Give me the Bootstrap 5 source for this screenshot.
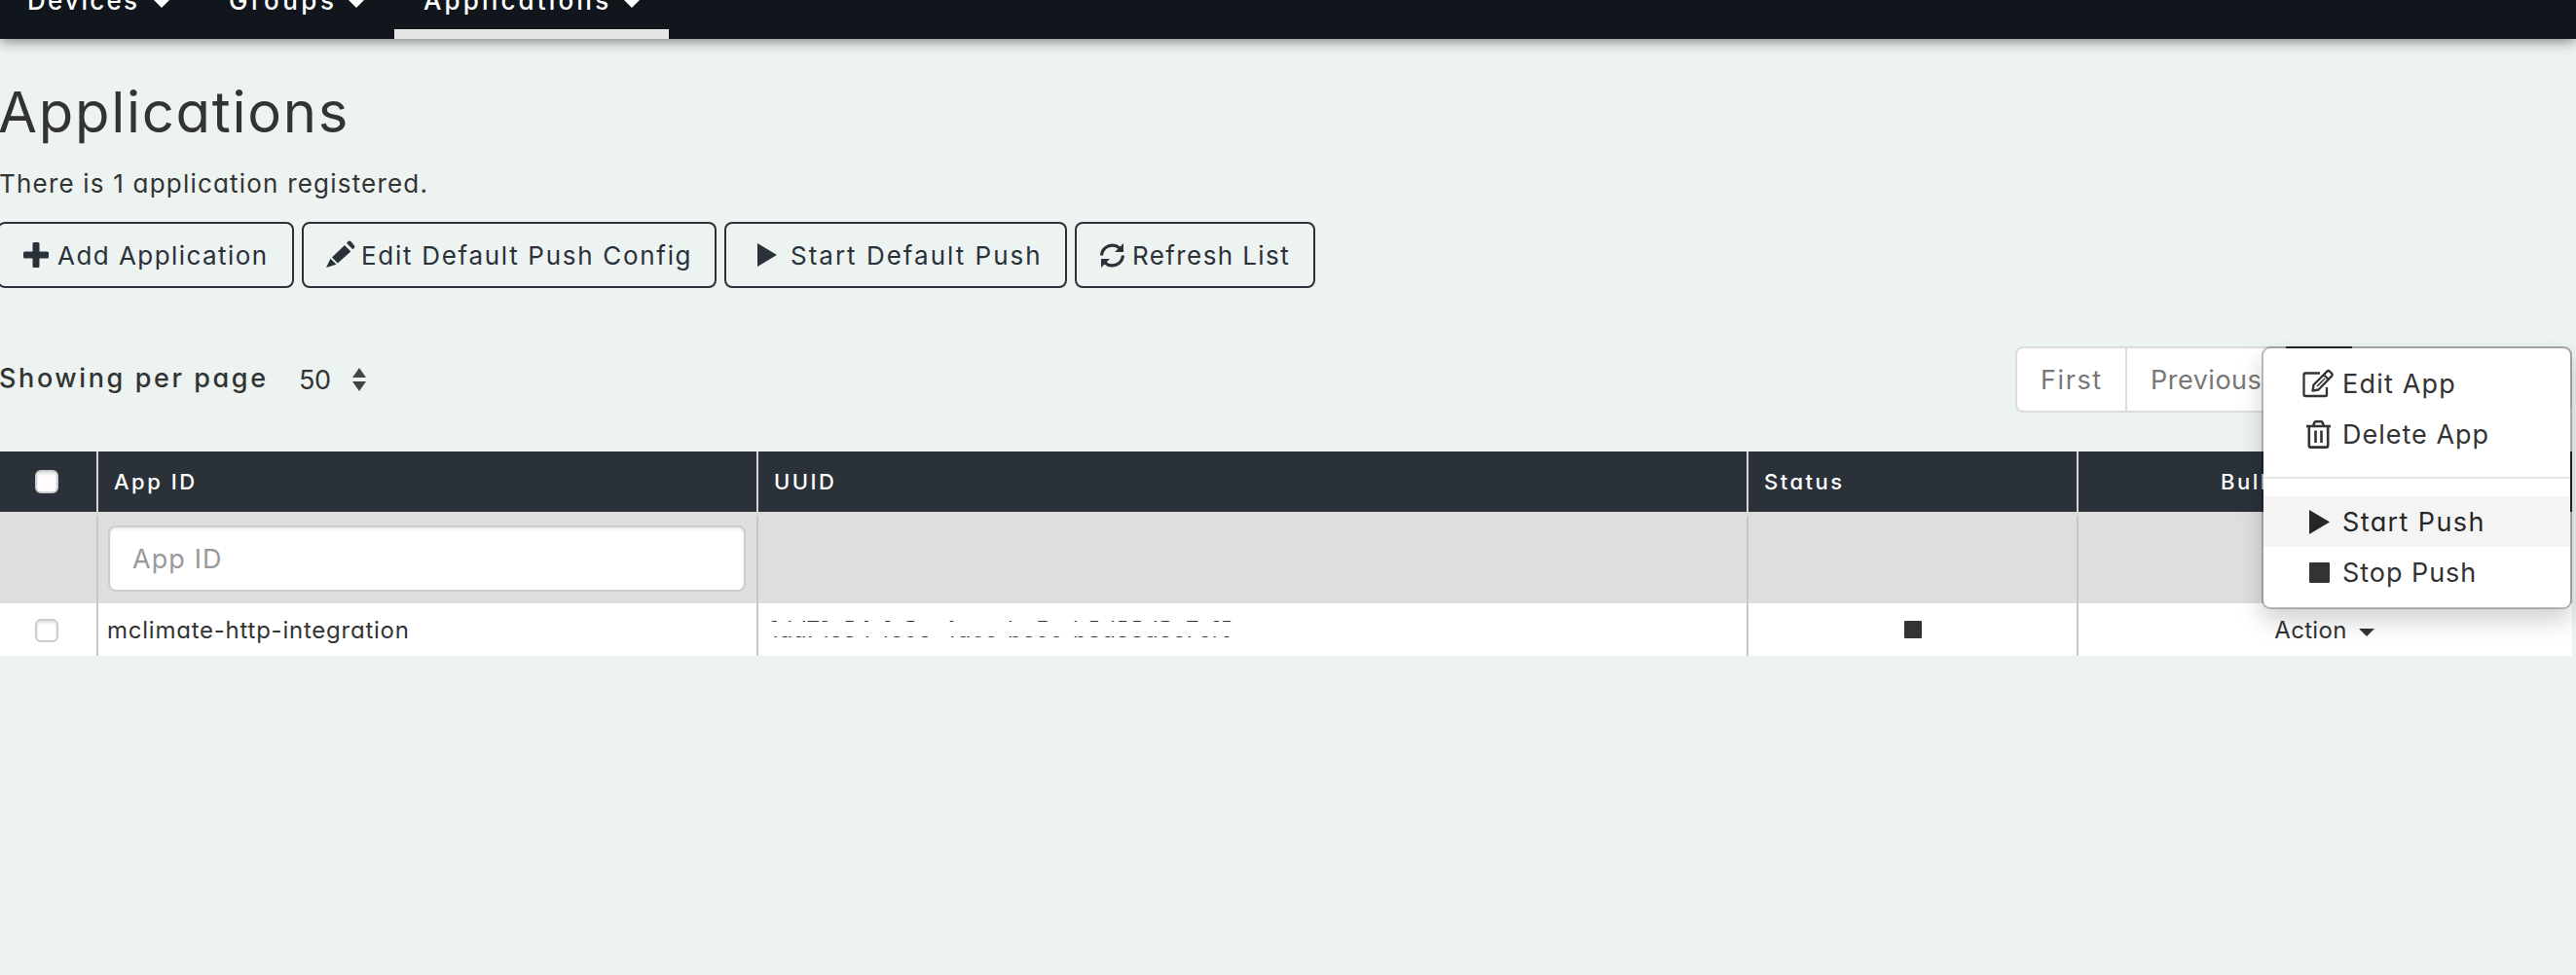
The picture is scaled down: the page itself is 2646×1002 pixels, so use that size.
<!DOCTYPE html>
<html lang="en">
<head>
<meta charset="utf-8">
<title>Applications</title>
<link href="https://cdn.jsdelivr.net/npm/bootstrap@5.3.0/dist/css/bootstrap.min.css" rel="stylesheet">
<style>
body{background:#ecf3f1;color:#333;font-family:Inter,"Liberation Sans",sans-serif;font-feature-settings:"cv11";font-size:26px;line-height:36px;letter-spacing:1.2px;overflow:hidden;min-height:1002px}
svg{display:block;flex:none}
.topbar{height:40px;background:#11161d;box-shadow:0 2px 14px rgba(0,0,0,.5);overflow:visible;padding:0;align-items:flex-end;flex-wrap:nowrap;justify-content:flex-start}
.topbar .nav-link{height:80px;padding:1px 0 0 30px;color:#fff;font-weight:500;display:flex;align-items:center;letter-spacing:2.3px;white-space:nowrap}
.topbar .nav-link:first-child{padding-left:28px}
.topbar .active{box-shadow:inset 0 -10px #e6e6e6}
.tri{width:0;height:0;border:9px solid transparent;border-top-color:currentColor;border-bottom:0;flex:none}
.topbar .tri{margin-left:14px;margin-top:5px}
h1.page-title{font-size:58px;line-height:64px;letter-spacing:1.72px;font-weight:400;margin:43px 0 24px -2px}
.act{height:68px;border:2px solid #2b3139;border-radius:8px;color:#2b3139;font-size:26px;padding:0;display:flex;align-items:center;white-space:nowrap}
.per{font-size:27px;font-weight:500;letter-spacing:2.6px}
.pg{height:68px;background:#fff;border:2px solid #dcdcdc;color:#777;font-size:27px;line-height:66px;padding:0 24px;white-space:nowrap}
.grid-table{width:2642px;table-layout:fixed;border-collapse:separate;border-spacing:0;letter-spacing:.76px;font-size:24px}
.grid-table th,.grid-table td{padding:0;vertical-align:middle;border-left:2px solid #c8c8c8}
.grid-table th{height:62px;background:#2a3139;color:#fff;font-size:22px;font-weight:550;letter-spacing:2.5px;padding-left:16px;border-color:#d4d4d4}
.grid-table th:first-child,.grid-table td:first-child{border-left:0;padding-left:0}
.grid-table .gap-row td{height:4px;background:#dcdcdc;border-color:#dcdcdc}
.grid-table .filter-row td{height:90px;background:#dedede}
.grid-table .data-row td{height:54px;background:#fff;padding-top:1px}
.chk{width:24px;height:24px;border:2px solid #ccc;border-radius:6px;background:#fff;box-shadow:inset 0 2px 3px rgba(0,0,0,.12);margin-left:36px}
.filter-input{width:655px;height:68px;border:2px solid #ccc;border-radius:8px;font-size:27px;letter-spacing:1.1px;padding:0 23px;margin:0 0 2px 10px;box-shadow:inset 0 2px 3px rgba(0,0,0,.08);font-family:inherit}
.filter-input::placeholder{color:#999}
.uid{position:relative;display:block;height:18px;line-height:18px;width:490px;padding-left:11px;overflow:hidden;letter-spacing:-.2px;white-space:nowrap;margin-top:-2px}
.uid::after{content:"";position:absolute;left:0;right:0;top:1.500px;height:15px;background:#fff}
.stop{width:18px;height:18px;background:#333;border-radius:1px;position:relative;top:-1px}
.popmenu{position:absolute;left:2323px;top:356px;width:319px;height:270px;background:#fff;background-clip:padding-box;border:2px solid rgba(0,0,0,.26);border-radius:9px;box-shadow:0 12px 24px rgba(0,0,0,.18);padding:10px 0;font-size:27px;letter-spacing:1.2px;z-index:5}
.popmenu .entry{height:52px;display:flex;align-items:center;color:#333;text-decoration:none;white-space:nowrap}
.popmenu .entry>span+span{padding-top:2px}
.popmenu .ico{width:81px;padding-left:40px;flex:none}
.popmenu hr{margin:18px 0;border:0;border-top:2px solid #e5e5e5;opacity:1}
.popmenu .hot{background:#f4f4f4;color:#262626}
</style>
<script src="https://cdn.jsdelivr.net/npm/bootstrap@5.3.0/dist/js/bootstrap.bundle.min.js"></script>
</head>
<body>
<nav class="navbar topbar">
  <a class="nav-link" style="width:205px">Devices<i class="tri"></i></a>
  <a class="nav-link" style="width:200px"><span style="letter-spacing:3.5px">Groups</span><i class="tri" style="margin-left:11px"></i></a>
  <a class="nav-link active" style="width:282px"><span style="letter-spacing:3.15px">Applications</span><i class="tri" style="margin-left:12px"></i></a>
</nav>
<main>
  <h1 class="page-title">Applications</h1>
  <p class="mb-0" style="margin-left:-1px">There is 1 application registered.</p>
  <div class="d-flex" style="margin-top:21px;margin-left:-3px;gap:8px">
    <button class="btn act" style="width:305px;padding-left:25px"><svg width="26" height="26" viewBox="0 0 26 26" fill="currentColor"><path d="M11 0h4q1.500 0 1.500 1.500v8H24.500Q26 9.500 26 11v4q0 1.500-1.500 1.500H16.500v8Q16.500 26 15 26h-4q-1.500 0-1.500-1.500v-8h-8Q0 16.500 0 15v-4q0-1.500 1.500-1.500h8v-8Q9.500 0 11 0z"/></svg><span style="margin-left:9px;letter-spacing:1.45px">Add Application</span></button>
    <button class="btn act" style="width:426px;padding-left:23px"><svg width="30" height="28" viewBox="0 0 30 28" fill="currentColor" style="margin-top:-3px"><path d="M22.500 1.300q1.500-1.500 3 0l3.200 3.700q1.300 1.500 0 3L27.300 9.300 21 2.800zM19 5l6.300 6.500L11.800 23.500 6 17.500zM4.500 18.800l6 6L0 28z"/></svg><span style="margin-left:6px;letter-spacing:1.7px">Edit Default Push Config</span></button>
    <button class="btn act" style="width:352px;padding-left:32px"><svg width="20" height="24" viewBox="0 0 20 24" fill="currentColor"><path d="M0 0v24l20-12z"/></svg><span style="margin-left:14px;letter-spacing:2px">Start Default Push</span></button>
    <button class="btn act" style="width:247px;padding-left:24px"><svg width="25" height="25" viewBox="0 0 25 25"><g fill="none" stroke="currentColor" stroke-width="3.200"><path d="M1.600 12.500A11 10.800 0 0 1 20 5"/><path d="M23.400 12.500A11 10.800 0 0 1 5 20"/></g><path fill="currentColor" d="M24 0v9h-9zM1 25v-9h9z"/></svg><span style="margin-left:8px;letter-spacing:1.4px">Refresh List</span></button>
  </div>
  <div class="d-flex align-items-center" style="height:68px;margin-top:60px;margin-bottom:40px">
    <span class="per" style="width:308px;margin-left:-1px;margin-top:-2px">Showing per page</span>
    <span style="width:55px;letter-spacing:-.4px;font-size:27px;margin-top:1px">50</span>
    <svg width="14" height="24" viewBox="0 0 14 24" fill="#444"><path d="M7 0l7 10H0zM0 14h14L7 24z"/></svg>
    <div class="d-flex" style="margin-left:auto;width:576px">
      <span class="pg" style="width:113px;border-radius:8px 0 0 8px;border-right-width:0;letter-spacing:1.6px">First</span>
      <span class="pg" style="width:165px;border-right-width:0;letter-spacing:.5px">Previous</span>
      <span class="pg" style="width:68px;background:#2a3139;border-color:#2a3139"></span>
      <span class="pg flex-grow-1" style="border-left-width:0;border-radius:0 8px 8px 0;margin-right:4px"></span>
    </div>
  </div>
  <table class="grid-table">
    <colgroup><col style="width:99px"><col style="width:678px"><col style="width:1017px"><col style="width:339px"><col></colgroup>
    <tr><th><div class="chk"></div></th><th>App ID</th><th>UUID</th><th>Status</th><th style="padding-left:146px">Bulk</th></tr>
    <tr class="gap-row"><td></td><td></td><td></td><td></td><td></td></tr>
    <tr class="filter-row"><td></td><td><input class="filter-input" placeholder="App ID"></td><td></td><td></td><td></td></tr>
    <tr class="data-row"><td><div class="chk"></div></td><td><div style="padding-left:9px">mclimate-http-integration</div></td><td><span class="uid">1dd71e84-fe0e-4acc-be5c-b8d88d8e7cf6</span></td><td><div class="stop mx-auto"></div></td>
    <td><div class="d-flex justify-content-center align-items-center" style="letter-spacing:.3px;margin-left:-2px">Action<i class="tri" style="margin-left:12px;border-width:8.500px;border-bottom-width:0;margin-top:4px"></i></div></td></tr>
  </table>
</main>
<div class="popmenu">
  <a class="entry"><span class="ico"><svg width="33" height="30" viewBox="0 0 33 30" fill="none" stroke="currentColor" stroke-width="2.300" stroke-linejoin="round"><path d="M18 4.500H3Q1.500 4.500 1.500 6v20.500Q1.500 28 3 28h20.500q1.500 0 1.500-1.500V19"/><path d="M10.500 22.500l1-6L25.300 2.600q1.300-1.200 2.600 0l2.200 2.200q1.200 1.300 0 2.600L16.500 21.500zM22 6.200l4.800 4.800"/><path stroke-width="1.600" d="M15 18l8-8"/></svg></span><span>Edit App</span></a>
  <a class="entry"><span class="ico" style="padding-left:44px"><svg width="25" height="29" viewBox="0 0 25 29" fill="none" stroke="currentColor" stroke-width="2.600" stroke-linejoin="round"><path d="M0 6h25M2.800 6v20q0 1.600 1.600 1.600h16.200q1.600 0 1.600-1.600V6M7 6l1.500-4Q9 1.300 10 1.300h5q1 0 1.500.7L18 6M9.500 10.500v12.500M15.500 10.500v12.500"/></svg></span><span style="letter-spacing:1px">Delete App</span></a>
  <hr>
  <a class="entry hot"><span class="ico" style="padding-left:47px"><svg width="21" height="25" viewBox="0 0 21 25" fill="currentColor"><path d="M0 0v25l21-12.500z"/></svg></span><span style="letter-spacing:1.4px">Start Push</span></a>
  <a class="entry"><span class="ico" style="padding-left:47px"><svg width="21" height="21"><rect width="21" height="21" rx="1" fill="currentColor"/></svg></span><span style="letter-spacing:.95px">Stop Push</span></a>
</div>
</body>
</html>
